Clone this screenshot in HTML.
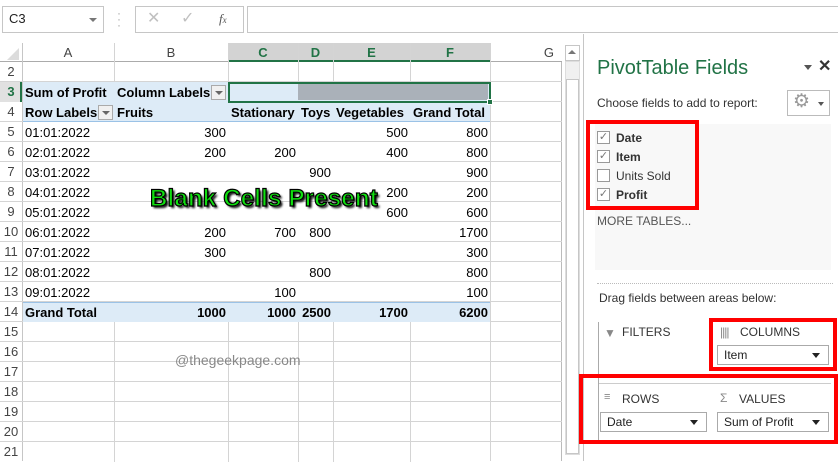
<!DOCTYPE html>
<html><head><meta charset="utf-8"><style>
*{margin:0;padding:0;box-sizing:border-box}
body{width:838px;height:461px;overflow:hidden;background:#fff;font-family:"Liberation Sans",Arial,sans-serif;position:relative;font-size:13px;color:#000}
.a{position:absolute}
.hl{position:absolute;height:1px;background:#d4d4d4}
.vl{position:absolute;width:1px;background:#d4d4d4}
.t{position:absolute;font-size:13px;line-height:20px;white-space:nowrap}
.r{text-align:right}
.b{font-weight:bold}
.rn{position:absolute;left:0;width:22px;text-align:center;font-size:13px;color:#444;line-height:20px}
.ch{position:absolute;top:43px;height:19px;text-align:center;line-height:19px;font-size:13px;color:#444}
.dd{position:absolute;width:15px;height:15px;border:1px solid #aaa;background:#f0f0f0}
.dd:after{content:"";position:absolute;left:3px;top:5px;border-left:4px solid transparent;border-right:4px solid transparent;border-top:4px solid #666}
.cb{position:absolute;left:597px;width:13px;height:13px;border:1px solid #999;background:#fff}
.ck{font-size:11px;color:#777;line-height:11px;text-align:center}
.ft{position:absolute;left:616px;font-size:12px;line-height:16px;color:#333}
.sel{position:absolute;height:20px;border:1px solid #aaa;background:#fff;font-size:12px;line-height:18px;padding-left:6px;color:#222}
.sel:after{content:"";position:absolute;right:8px;top:7px;border-left:4px solid transparent;border-right:4px solid transparent;border-top:5px solid #222}
.red{position:absolute;border:4px solid #f00}
.lab{position:absolute;font-size:12px;color:#333;line-height:14px}
</style></head><body>
<div class="a" style="left:2px;top:6px;width:102px;height:27px;border:1px solid #c6c6c6"></div>
<div class="t" style="left:9px;top:9px;font-size:13px;color:#222">C3</div>
<div class="a" style="left:89px;top:18px;border-left:4px solid transparent;border-right:4px solid transparent;border-top:4px solid #777"></div>
<div class="a" style="left:117px;top:10px;color:#aaa;font-size:12px;line-height:6px">·<br>·<br>·</div>
<div class="a" style="left:135px;top:6px;width:109px;height:27px;border:1px solid #c6c6c6"></div>
<div class="t" style="left:147px;top:9px;color:#c0c0c0;font-size:16px">✕</div>
<div class="t" style="left:181px;top:9px;color:#c0c0c0;font-size:16px">✓</div>
<div class="t" style="left:219px;top:9px;color:#555;font-family:'Liberation Serif',serif;font-style:italic;font-size:13px">f<span style="font-size:9px">x</span></div>
<div class="a" style="left:247px;top:6px;width:600px;height:27px;border:1px solid #c6c6c6"></div>

<div class="a" style="left:0;top:43px;width:562px;height:19px;background:#fff;border-bottom:1px solid #ababab"></div>
<div class="a" style="left:7px;top:48px;width:0;height:0;border-left:12px solid transparent;border-bottom:12px solid #dcdcdc"></div>
<div class="a" style="left:228px;top:43px;width:262px;height:19px;background:#d3d3d3;border-bottom:2px solid #217346"></div>
<div class="ch" style="left:22px;width:92px">A</div>
<div class="ch" style="left:114px;width:114px">B</div>
<div class="ch b" style="left:228px;width:70px;color:#217346">C</div>
<div class="ch b" style="left:298px;width:35px;color:#217346">D</div>
<div class="ch b" style="left:333px;width:77px;color:#217346">E</div>
<div class="ch b" style="left:410px;width:80px;color:#217346">F</div>
<div class="ch" style="left:490px;width:72px;text-align:right;padding-right:8px">G</div>

<div class="vl" style="left:22px;top:43px;height:418px;background:#c6c6c6"></div>
<div class="vl" style="left:114px;top:43px;height:40px"></div>
<div class="vl" style="left:228px;top:43px;height:40px"></div>
<div class="vl" style="left:298px;top:43px;height:40px"></div>
<div class="vl" style="left:333px;top:43px;height:40px"></div>
<div class="vl" style="left:410px;top:43px;height:40px"></div>
<div class="vl" style="left:114px;top:322px;height:140px"></div>
<div class="vl" style="left:228px;top:322px;height:140px"></div>
<div class="vl" style="left:298px;top:322px;height:140px"></div>
<div class="vl" style="left:333px;top:322px;height:140px"></div>
<div class="vl" style="left:410px;top:322px;height:140px"></div>
<div class="vl" style="left:490px;top:43px;height:418px"></div>
<div class="vl" style="left:561px;top:62px;height:399px;background:#bbb"></div>

<div class="hl" style="left:0;top:81px;width:562px"></div>
<div class="hl" style="left:0;top:101px;width:562px"></div>
<div class="hl" style="left:0;top:121px;width:562px"></div>
<div class="hl" style="left:0;top:141px;width:562px"></div>
<div class="hl" style="left:0;top:161px;width:562px"></div>
<div class="hl" style="left:0;top:181px;width:562px"></div>
<div class="hl" style="left:0;top:201px;width:562px"></div>
<div class="hl" style="left:0;top:221px;width:562px"></div>
<div class="hl" style="left:0;top:241px;width:562px"></div>
<div class="hl" style="left:0;top:261px;width:562px"></div>
<div class="hl" style="left:0;top:281px;width:562px"></div>
<div class="hl" style="left:0;top:301px;width:562px"></div>
<div class="hl" style="left:0;top:321px;width:562px"></div>
<div class="hl" style="left:0;top:341px;width:562px"></div>
<div class="hl" style="left:0;top:361px;width:562px"></div>
<div class="hl" style="left:0;top:381px;width:562px"></div>
<div class="hl" style="left:0;top:401px;width:562px"></div>
<div class="hl" style="left:0;top:421px;width:562px"></div>
<div class="hl" style="left:0;top:441px;width:562px"></div>

<div class="a" style="left:23px;top:82px;width:467px;height:40px;background:#ddebf7;border-bottom:1px solid #9bc2e6"></div>
<div class="a" style="left:23px;top:302px;width:467px;height:20px;background:#ddebf7;border-top:1px solid #9bc2e6"></div>
<div class="a" style="left:298px;top:84px;width:190px;height:16px;background:#aab1b9"></div>
<div class="a" style="left:228px;top:82px;width:263px;height:21px;border:2px solid #217346"></div>
<div class="a" style="left:487px;top:99px;width:6px;height:6px;background:#217346;border:1px solid #fff"></div>
<div class="a" style="left:20px;top:82px;width:2px;height:20px;background:#217346"></div>
<div class="a" style="left:0;top:82px;width:20px;height:20px;background:#e1e1e1"></div>

<div class="rn" style="top:62px">2</div>
<div class="rn b" style="top:82px;color:#217346">3</div>
<div class="rn" style="top:102px">4</div>
<div class="rn" style="top:122px">5</div>
<div class="rn" style="top:142px">6</div>
<div class="rn" style="top:162px">7</div>
<div class="rn" style="top:182px">8</div>
<div class="rn" style="top:202px">9</div>
<div class="rn" style="top:222px">10</div>
<div class="rn" style="top:242px">11</div>
<div class="rn" style="top:262px">12</div>
<div class="rn" style="top:282px">13</div>
<div class="rn" style="top:302px">14</div>
<div class="rn" style="top:322px">15</div>
<div class="rn" style="top:342px">16</div>
<div class="rn" style="top:362px">17</div>
<div class="rn" style="top:382px">18</div>
<div class="rn" style="top:402px">19</div>
<div class="rn" style="top:422px">20</div>
<div class="rn" style="top:442px">21</div>

<div class="t b" style="left:25px;top:83px">Sum of Profit</div>
<div class="t b" style="left:117px;top:83px">Column Labels</div>
<div class="dd" style="left:211px;top:85px"></div>
<div class="t b" style="left:25px;top:103px">Row Labels</div>
<div class="dd" style="left:98px;top:105px"></div>
<div class="t b" style="left:117px;top:103px">Fruits</div>
<div class="t b" style="left:231px;top:103px">Stationary</div>
<div class="t b" style="left:301px;top:103px">Toys</div>
<div class="t b" style="left:336px;top:103px">Vegetables</div>
<div class="t b" style="left:413px;top:103px">Grand Total</div>

<div class="t" style="left:25px;top:123px">01:01:2022</div>
<div class="t" style="left:25px;top:143px">02:01:2022</div>
<div class="t" style="left:25px;top:163px">03:01:2022</div>
<div class="t" style="left:25px;top:183px">04:01:2022</div>
<div class="t" style="left:25px;top:203px">05:01:2022</div>
<div class="t" style="left:25px;top:223px">06:01:2022</div>
<div class="t" style="left:25px;top:243px">07:01:2022</div>
<div class="t" style="left:25px;top:263px">08:01:2022</div>
<div class="t" style="left:25px;top:283px">09:01:2022</div>
<div class="t b" style="left:25px;top:303px">Grand Total</div>

<div class="t r" style="right:612px;top:123px">300</div>
<div class="t r" style="right:430px;top:123px">500</div>
<div class="t r" style="right:350px;top:123px">800</div>
<div class="t r" style="right:612px;top:143px">200</div>
<div class="t r" style="right:542px;top:143px">200</div>
<div class="t r" style="right:430px;top:143px">400</div>
<div class="t r" style="right:350px;top:143px">800</div>
<div class="t r" style="right:507px;top:163px">900</div>
<div class="t r" style="right:350px;top:163px">900</div>
<div class="t r" style="right:430px;top:183px">200</div>
<div class="t r" style="right:350px;top:183px">200</div>
<div class="t r" style="right:430px;top:203px">600</div>
<div class="t r" style="right:350px;top:203px">600</div>
<div class="t r" style="right:612px;top:223px">200</div>
<div class="t r" style="right:542px;top:223px">700</div>
<div class="t r" style="right:507px;top:223px">800</div>
<div class="t r" style="right:350px;top:223px">1700</div>
<div class="t r" style="right:612px;top:243px">300</div>
<div class="t r" style="right:350px;top:243px">300</div>
<div class="t r" style="right:507px;top:263px">800</div>
<div class="t r" style="right:350px;top:263px">800</div>
<div class="t r" style="right:542px;top:283px">100</div>
<div class="t r" style="right:350px;top:283px">100</div>
<div class="t r b" style="right:612px;top:303px">1000</div>
<div class="t r b" style="right:542px;top:303px">1000</div>
<div class="t r b" style="right:507px;top:303px">2500</div>
<div class="t r b" style="right:430px;top:303px">1700</div>
<div class="t r b" style="right:350px;top:303px">6200</div>

<div class="a" style="left:150px;top:185px;font-size:24px;font-weight:bold;color:#10e010;-webkit-text-stroke:1.2px #000;text-shadow:2px 2px 2px #000;white-space:nowrap;letter-spacing:0.2px">Blank Cells Present</div>
<div class="t" style="left:175px;top:350px;color:#888;font-size:14px">@thegeekpage.com</div>

<div class="a" style="left:562px;top:43px;width:21px;height:418px;background:#fff"></div>
<div class="a" style="left:565px;top:45px;width:15px;height:16px;border:1px solid #c6c6c6;background:#fff"></div>
<div class="a" style="left:568px;top:50px;border-left:4px solid transparent;border-right:4px solid transparent;border-bottom:4px solid #777"></div>
<div class="a" style="left:565px;top:61px;width:15px;height:394px;background:#f0f0f0;border:1px solid #ddd"></div>
<div class="a" style="left:566px;top:79px;width:13px;height:375px;background:#fff;border:1px solid #c6c6c6"></div>

<div class="a" style="left:583px;top:34px;width:1px;height:427px;background:#c6c6c6"></div>
<div class="a" style="left:597px;top:57px;font-size:20px;color:#217346;white-space:nowrap">PivotTable Fields</div>
<div class="a" style="left:804px;top:65px;border-left:4px solid transparent;border-right:4px solid transparent;border-top:5px solid #555"></div>
<div class="a" style="left:818px;top:56px;font-size:16px;color:#333;font-weight:bold">✕</div>
<div class="a" style="left:597px;top:96px;font-size:12px;color:#333;white-space:nowrap">Choose fields to add to report:</div>
<div class="a" style="left:787px;top:90px;width:43px;height:26px;border:1px solid #bbb;background:#fff"></div>
<div class="a" style="left:793px;top:90px;font-size:19px;color:#999">⚙</div>
<div class="a" style="left:818px;top:102px;border-left:3px solid transparent;border-right:3px solid transparent;border-top:4px solid #555"></div>
<div class="a" style="left:595px;top:124px;width:236px;height:146px;background:#f8f8f8"></div>
<div class="cb ck" style="top:131px">✓</div>
<div class="ft b" style="top:130px">Date</div>
<div class="cb ck" style="top:150px">✓</div>
<div class="ft b" style="top:149px">Item</div>
<div class="cb" style="top:169px"></div>
<div class="ft" style="top:168px">Units Sold</div>
<div class="cb ck" style="top:188px">✓</div>
<div class="ft b" style="top:187px">Profit</div>
<div class="red" style="left:586px;top:120px;width:113px;height:90px"></div>
<div class="a" style="left:597px;top:214px;font-size:12px;color:#555;white-space:nowrap">MORE TABLES...</div>
<div class="a" style="left:597px;top:283px;width:236px;border-top:1px dotted #bbb"></div>
<div class="a" style="left:599px;top:291px;font-size:12px;color:#333;white-space:nowrap">Drag fields between areas below:</div>
<div class="a" style="left:598px;top:322px;width:1px;height:118px;background:#aaa"></div>
<div class="a" style="left:599px;top:383px;width:232px;height:1px;background:#ccc"></div>

<div class="lab" style="left:604px;top:326px;color:#888">▼</div>
<div class="lab" style="left:622px;top:325px">FILTERS</div>
<div class="lab" style="left:720px;top:325px;color:#888;letter-spacing:-1px">||||</div>
<div class="lab" style="left:740px;top:325px">COLUMNS</div>
<div class="sel" style="left:717px;top:345px;width:112px">Item</div>
<div class="red" style="left:709px;top:318px;width:128px;height:53px"></div>

<div class="lab" style="left:604px;top:390px;color:#888;font-size:11px">≡</div>
<div class="lab" style="left:622px;top:392px">ROWS</div>
<div class="lab" style="left:720px;top:391px;color:#888">Σ</div>
<div class="lab" style="left:739px;top:392px">VALUES</div>
<div class="sel" style="left:600px;top:412px;width:107px">Date</div>
<div class="sel" style="left:717px;top:412px;width:112px">Sum of Profit</div>
<div class="red" style="left:579px;top:374px;width:262px;height:70px;border-right:none"></div>
<div class="a" style="left:834px;top:374px;width:4px;height:70px;background:#f00"></div>
</body></html>
